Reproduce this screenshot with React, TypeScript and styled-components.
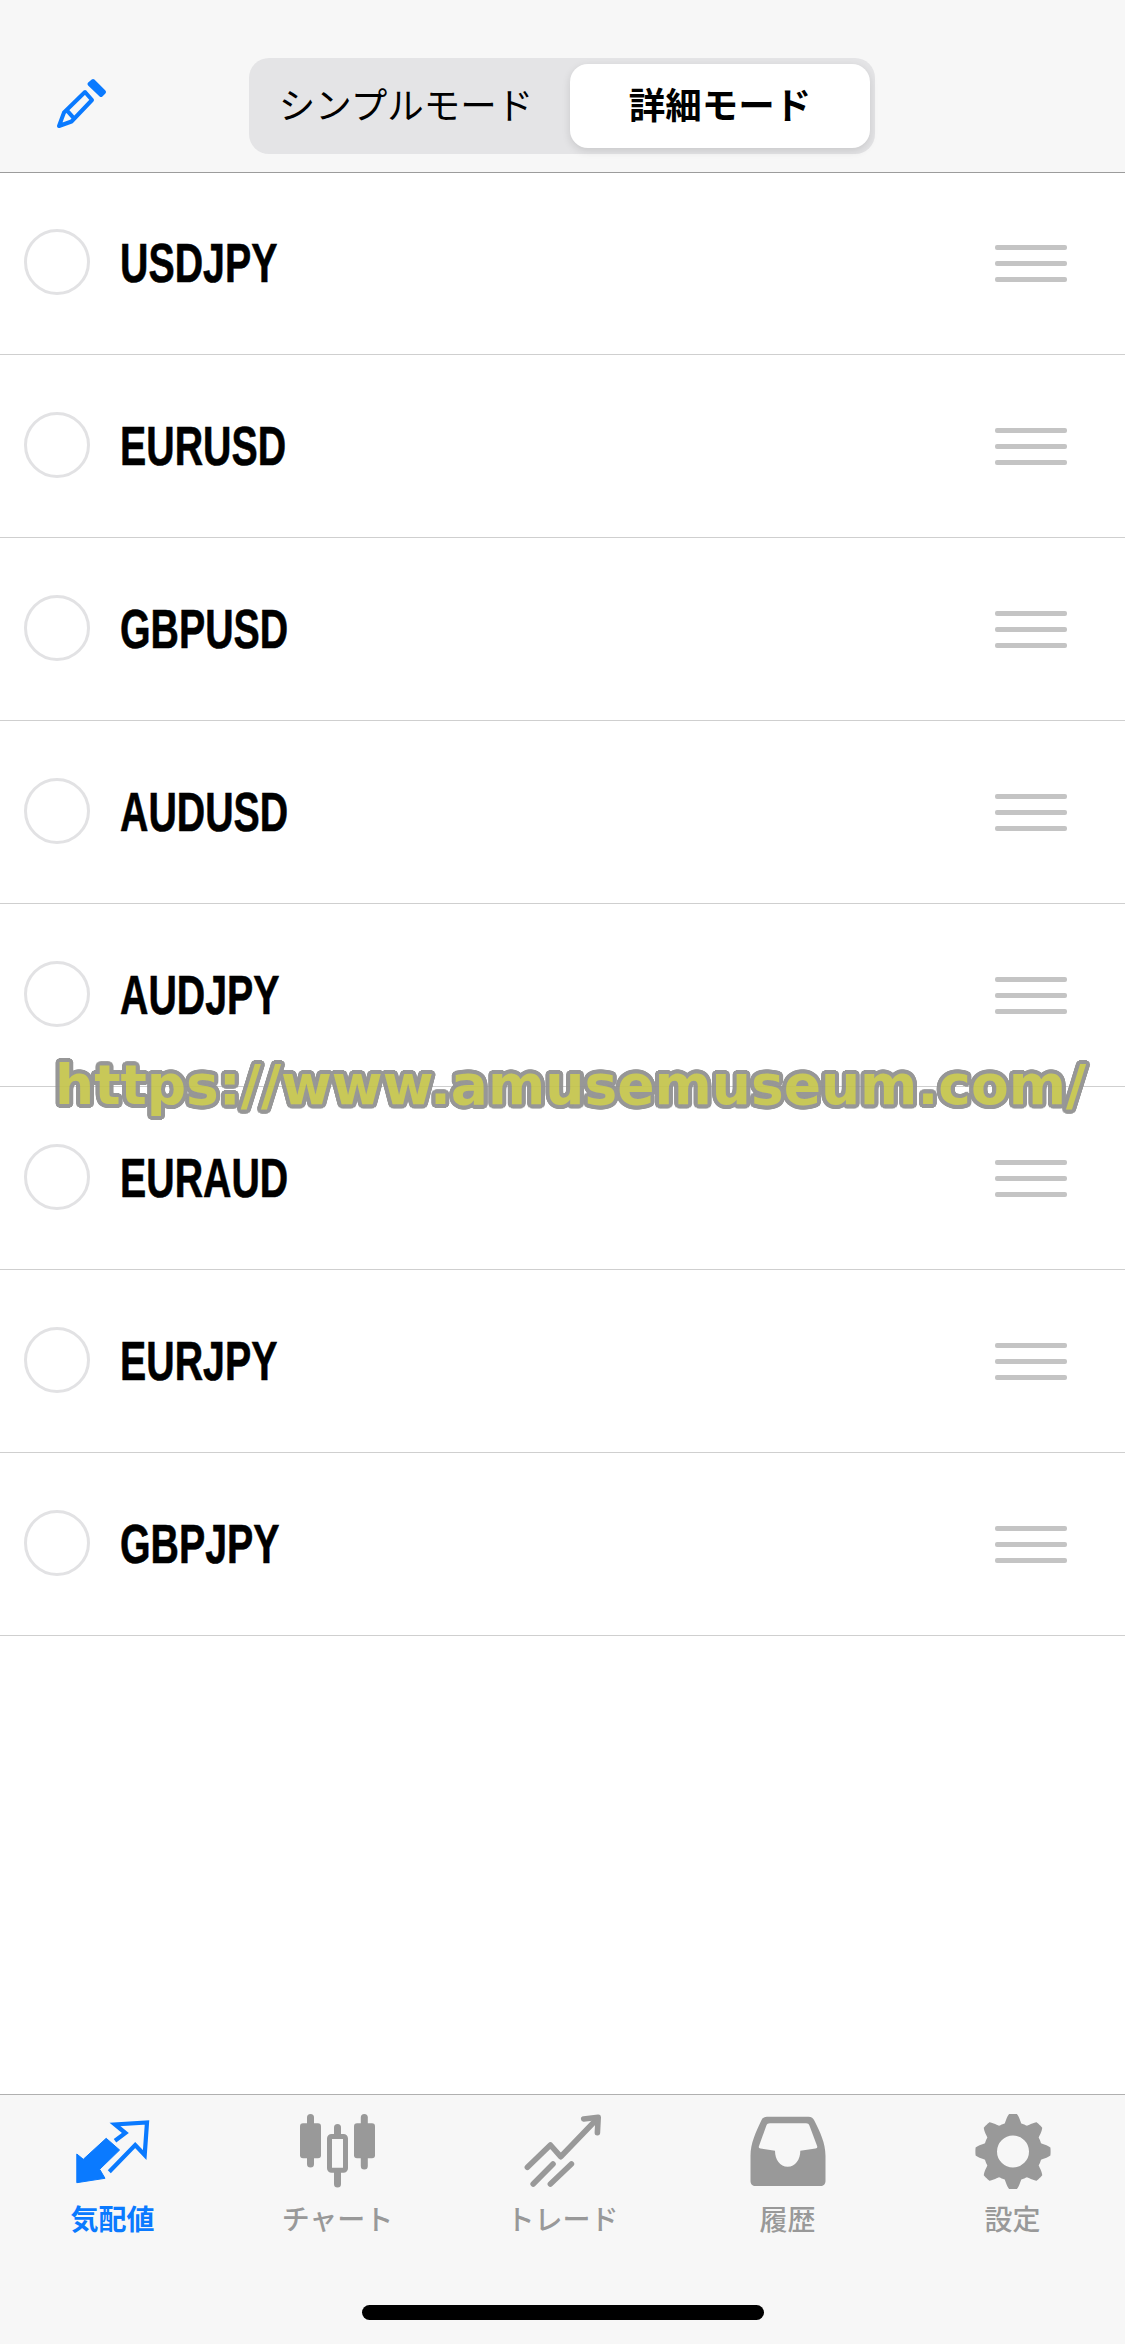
import styled, { createGlobalStyle } from 'styled-components';

const PAIRS = ['USDJPY', 'EURUSD', 'GBPUSD', 'AUDUSD', 'AUDJPY', 'EURAUD', 'EURJPY', 'GBPJPY'];

// 8 soft lobes round the centre
const gearPath = () => {
  const pts: string[] = [];
  for (let i = 0; i < 240; i++) {
    const t = (i / 240) * Math.PI * 2;
    const wave = Math.max(-1, Math.min(1, 1.5 * Math.cos(8 * t)));
    const r = 33.4 + 4.2 * wave;
    pts.push(`${(40 + r * Math.sin(t)).toFixed(2)} ${(39.5 - r * Math.cos(t)).toFixed(2)}`);
  }
  return `M${pts.join('L')}Z M56 39.5a16 16 0 1 0 -32 0a16 16 0 1 0 32 0Z`;
};

// round outline for the watermark, text stroke leaves sharp corners
const outline = (radius: number, color: string) =>
  Array.from({ length: 24 }, (_, i) => {
    const t = (i / 24) * Math.PI * 2;
    return `${(radius * Math.cos(t)).toFixed(2)}px ${(radius * Math.sin(t)).toFixed(2)}px 0 ${color}`;
  }).join(', ');

const QuotesIcon = () => (
  <Sty.TabIcon viewBox='0 0 80 80'>
    <path
      d='M3.8 70.7V42l6.5 5.3L33.2 26.3 46.6 38 26.7 57.3 32 66.3Z'
      fill='currentColor'
      stroke='currentColor'
      strokeWidth='1'
      strokeLinejoin='round'
    />
    <path
      d='M36.3 59.7 62.2 33 71.7 43 74 10.5 42 12.5 52.4 21 42 28.7'
      fill='none'
      stroke='currentColor'
      strokeWidth='4.2'
    />
  </Sty.TabIcon>
);

const ChartIcon = () => (
  <Sty.TabIcon viewBox='0 0 80 80'>
    <g fill='none' stroke='currentColor' strokeWidth='7' strokeLinecap='round'>
      <path d='M12.5 5.5V52' />
      <path d='M39.5 15.5V72' />
      <path d='M66.3 5.5V54' />
    </g>
    <rect x='2' y='11.3' width='21' height='35' rx='3' fill='currentColor' />
    <rect x='56' y='11.3' width='21' height='35' rx='3' fill='currentColor' />
    <rect x='31.5' y='24.5' width='16' height='33.7' rx='2' fill='#f7f7f7' stroke='currentColor' strokeWidth='5' />
  </Sty.TabIcon>
);

const TradeIcon = () => (
  <Sty.TabIcon viewBox='0 0 80 80'>
    <g fill='none' stroke='currentColor' strokeWidth='5.6' strokeLinecap='round' strokeLinejoin='round'>
      <path d='M4.4 55.3 27.4 33 37.7 44.7 73 8' />
      <path d='M60.7 7 75.2 5.3 74.4 20.7' />
      <path d='M10.2 72 30 52' />
      <path d='M27.4 72 48.4 52' />
    </g>
  </Sty.TabIcon>
);

const HistoryIcon = () => (
  <Sty.TabIcon viewBox='0 0 80 80'>
    <path
      fillRule='evenodd'
      fill='currentColor'
      d='M19 4.7H60.5C63.5 4.7 65.2 6 66.3 8.5 72 20 77.5 31 77.5 44V69C77.5 72 75.5 74 72.5 74H7.5C4.5 74 2.5 72 2.5 69V44C2.5 31 8 20 13.3 8.5 14.5 6 16 4.7 19 4.7Z M22 11.3C20 11.3 19 12 18.3 13.7L11 34C10.4 35.6 11 36.3 12.5 36.5L27 38.7C27 47.5 32 54.7 39.7 54.7 47.4 54.7 52.3 47.5 52.3 38.7L67.5 36.5C69 36.3 69.6 35.6 69.1 34L61.5 13.7C60.8 12 59.8 11.3 58 11.3Z'
    />
  </Sty.TabIcon>
);

const GearIcon = () => (
  <Sty.TabIcon viewBox='0 0 80 80'>
    <path fillRule='evenodd' fill='currentColor' d={gearPath()} />
  </Sty.TabIcon>
);

const TABS = [
  { label: '気配値', Icon: QuotesIcon, active: true },
  { label: 'チャート', Icon: ChartIcon, active: false },
  { label: 'トレード', Icon: TradeIcon, active: false },
  { label: '履歴', Icon: HistoryIcon, active: false },
  { label: '設定', Icon: GearIcon, active: false },
];

const App = () => {
  return (
    <Sty.Page>
      <GlobalStyle />
      <Sty.Header>
        <Sty.Pencil viewBox='0 0 100 100'>
          <path
            d='M34 62.5 55 42 62 50 41.5 71.5 29 76Z M36 59.3 44 68.3'
            fill='none'
            stroke='currentColor'
            strokeWidth='4'
            strokeLinejoin='round'
          />
          <path
            d='M59.5 34 63 31 74 42 71 45Z'
            fill='currentColor'
            stroke='currentColor'
            strokeWidth='4'
            strokeLinejoin='round'
          />
        </Sty.Pencil>
        <Sty.Segment>
          <Sty.SegmentItem>シンプルモード</Sty.SegmentItem>
          <Sty.SegmentItem $active>詳細モード</Sty.SegmentItem>
        </Sty.Segment>
      </Sty.Header>

      <Sty.List>
        {PAIRS.map((pair) => (
          <Sty.Row key={pair}>
            <Sty.Radio />
            <Sty.Pair>
              <span>{pair}</span>
            </Sty.Pair>
            <Sty.Handle>
              <i />
              <i />
              <i />
            </Sty.Handle>
          </Sty.Row>
        ))}
      </Sty.List>

      <Sty.TabBar>
        <Sty.Tabs>
          {TABS.map(({ label, Icon, active }) => (
            <Sty.Tab key={label} $active={active}>
              <Icon />
              <span>{label}</span>
            </Sty.Tab>
          ))}
        </Sty.Tabs>
        <Sty.HomeBar />
      </Sty.TabBar>

      <Sty.Watermark>https://www.amusemuseum.com/</Sty.Watermark>
    </Sty.Page>
  );
};

const GlobalStyle = createGlobalStyle`
  html, body {
    margin: 0;
    padding: 0;
    background: #fff;
  }
`;

const Sty = {
  Page: styled.div`
    position: relative;
    width: 1125px;
    height: 2344px;
    display: flex;
    flex-direction: column;
    overflow: hidden;
    background: #fff;
    font-family: 'Noto Sans CJK JP', 'Liberation Sans', sans-serif;
  `,
  Header: styled.header`
    height: 172px;
    flex: none;
    box-sizing: content-box;
    display: grid;
    grid-template-columns: 249px auto 1fr;
    align-items: start;
    background: #f7f7f7;
    border-bottom: 1px solid #9c9c9c;
  `,
  Pencil: styled.svg`
    width: 100px;
    height: 100px;
    margin: 50px 0 0 30px;
    color: #0a7aff;
  `,
  Segment: styled.div`
    width: 626px;
    height: 96px;
    margin-top: 58px;
    box-sizing: border-box;
    padding: 6px 5px 6px 6px;
    display: flex;
    justify-content: space-between;
    background: #e4e4e6;
    border-radius: 20px;
  `,
  SegmentItem: styled.div<{ $active?: boolean }>`
    width: ${({ $active }) => ($active ? '300px' : '302px')};
    height: 84px;
    box-sizing: border-box;
    padding-bottom: 3px;
    display: flex;
    align-items: center;
    justify-content: center;
    font-size: 36.5px;
    line-height: 1;
    color: #000;
    font-weight: ${({ $active }) => ($active ? 700 : 400)};
    background: ${({ $active }) => ($active ? '#fff' : 'transparent')};
    border-radius: 18px;
    box-shadow: ${({ $active }) => ($active ? '0 3px 8px rgba(0, 0, 0, 0.12)' : 'none')};
  `,
  List: styled.div`
    flex: 1;
    margin-top: -1px;
  `,
  Row: styled.div`
    height: 183px;
    box-sizing: border-box;
    display: flex;
    align-items: center;
    padding: 0 58px 0 24px;
    border-bottom: 1px solid #cfcfcf;
  `,
  Radio: styled.div`
    width: 66px;
    height: 66px;
    box-sizing: border-box;
    border: 3px solid #e2e2e4;
    border-radius: 50%;
    margin-top: -2px;
  `,
  Pair: styled.div`
    flex: 1;
    margin-left: 30px;
    font-family: 'Liberation Sans', Arial, sans-serif;
    font-weight: 700;
    font-size: 55px;
    line-height: 1;
    color: #000;

    span {
      display: inline-block;
      transform: scaleX(0.715);
      transform-origin: left center;
      -webkit-text-stroke: 0.6px #000;
    }
  `,
  Handle: styled.div`
    width: 72px;
    display: flex;
    flex-direction: column;
    gap: 11px;

    i {
      display: block;
      height: 5px;
      border-radius: 2px;
      background: #c4c4c4;
    }
  `,
  TabBar: styled.footer`
    height: 250px;
    flex: none;
    box-sizing: border-box;
    display: flex;
    flex-direction: column;
    background: #f7f7f7;
    border-top: 1px solid #b0b0b0;
  `,
  Tabs: styled.nav`
    display: grid;
    grid-template-columns: repeat(5, 1fr);
    padding-top: 17px;
    height: 193px;
    box-sizing: border-box;
  `,
  Tab: styled.div<{ $active?: boolean }>`
    display: flex;
    flex-direction: column;
    align-items: center;
    color: ${({ $active }) => ($active ? '#0a7aff' : '#999999')};
    font-size: 28px;
    line-height: 40px;

    span {
      margin-top: 6px;
      font-weight: ${({ $active }) => ($active ? 700 : 500)};
    }
  `,
  TabIcon: styled.svg`
    width: 80px;
    height: 80px;
    display: block;
  `,
  HomeBar: styled.div`
    width: 402px;
    height: 15px;
    margin: 17px auto 0 362px;
    border-radius: 8px;
    background: #000;
  `,
  Watermark: styled.div`
    position: absolute;
    left: 55px;
    top: 1050px;
    font-family: 'DejaVu Sans', sans-serif;
    font-weight: 700;
    font-size: 55px;
    line-height: 70px;
    white-space: nowrap;
    color: #c4c44a;
    text-shadow: ${outline(4, '#8f8f8f')}, ${outline(2, '#8f8f8f')};
    opacity: 0.92;
  `,
};

export default App;
